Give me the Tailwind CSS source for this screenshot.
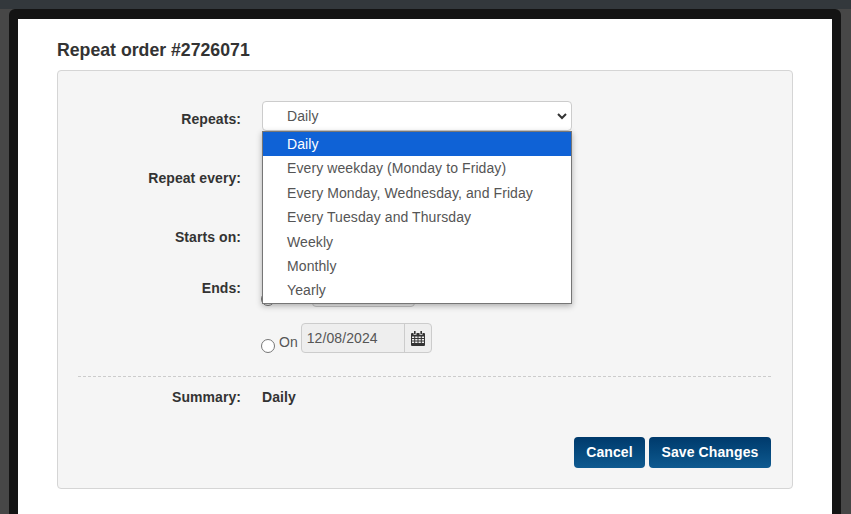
<!DOCTYPE html>
<html lang="en">
<head>
    <meta charset="UTF-8">
    <title>Repeat order</title>
    <script src="https://cdn.jsdelivr.net/npm/@tailwindcss/browser@4"></script>
</head>
<body class="h-[514px] w-[851px] overflow-hidden bg-[#474747] font-['Liberation_Sans',Arial,sans-serif] text-[#333]">
    <div class="h-[9px] bg-[#33383c]"></div>

    <!-- Modal -->
    <div class="ml-[9px] h-[505px] w-[832px] rounded-t-md bg-[#141414] px-[9px] pt-[10px]">
        <div class="h-[495px] w-[814px] bg-white px-[39px]">
            <h1 class="pt-[21px] text-[17.7px] leading-[20px] font-bold text-[#333]">Repeat order #2726071</h1>

            <div class="mt-[10px] h-[419px] w-[736px] rounded border border-[#d5d5d5] bg-[#f5f5f5] pt-[30px]">
                <!-- Repeats -->
                <div class="flex h-[30px]">
                    <div class="w-[183px] pt-[9px] text-right text-[14px] leading-[18px] font-bold tracking-[0.07px]">Repeats:</div>
                    <div class="relative ml-[21px] w-[310px]">
                        <div class="flex h-[30px] items-center justify-between rounded border border-[#ccc] bg-white pr-[3px] pl-[24px] text-[14px] tracking-[0.09px] text-[#555]">
                            <span>Daily</span>
                            <svg width="12" height="12" viewBox="0 0 12 12" fill="none" stroke="#333" stroke-width="2"><path d="M2 4l4 4 4-4"/></svg>
                        </div>
                        <ul class="absolute top-[30px] left-0 z-10 w-[310px] border border-[#767676] bg-white text-[14px] leading-[24.4px] tracking-[0.09px] text-[#555] shadow-[0_2px_6px_rgba(0,0,0,0.3)]">
                            <li class="bg-[#0f62d6] pl-[24px] text-white">Daily</li>
                            <li class="pl-[24px]">Every weekday (Monday to Friday)</li>
                            <li class="pl-[24px]">Every Monday, Wednesday, and Friday</li>
                            <li class="pl-[24px]">Every Tuesday and Thursday</li>
                            <li class="pl-[24px]">Weekly</li>
                            <li class="pl-[24px]">Monthly</li>
                            <li class="pl-[24px]">Yearly</li>
                        </ul>
                    </div>
                </div>

                <!-- Repeat every -->
                <div class="mt-[29px] h-[30px] w-[183px] pt-[9px] text-right text-[14px] leading-[18px] font-bold tracking-[0.07px]">Repeat every:</div>

                <!-- Starts on -->
                <div class="mt-[29px] h-[30px] w-[183px] pt-[9px] text-right text-[14px] leading-[18px] font-bold tracking-[0.07px]">Starts on:</div>

                <!-- Ends -->
                <div class="mt-[28px] flex h-[30px]">
                    <div class="w-[183px] pt-[2px] text-right text-[14px] leading-[18px] font-bold tracking-[0.07px]">Ends:</div>
                    <div class="ml-[20px] flex items-end">
                        <span class="mb-px h-[14px] w-[14px] rounded-full border border-[#767676] bg-white"></span>
                        <span class="ml-[37px] h-[30px] w-[103px] rounded border border-[#c4c4c4] bg-[#eee]"></span>
                    </div>
                </div>

                <!-- On date -->
                <div class="mt-[16px] flex h-[30px] pl-[203px]">
                    <span class="mt-[16px] h-[14px] w-[14px] rounded-full border border-[#767676] bg-white"></span>
                    <span class="ml-[4px] pt-[9px] text-[14px] leading-[20px] text-[#555]">On</span>
                    <div class="ml-[3px] flex h-[30px] w-[131px] rounded border border-[#ccc] bg-[#eee]">
                        <span class="flex-1 pl-[5px] text-[14px] leading-[28px] tracking-[0.09px] text-[#555]">12/08/2024</span>
                        <span class="flex w-[27px] items-center justify-center border-l border-[#ccc]">
                            <svg width="14" height="15" viewBox="0 0 14 15" fill="#333"><path d="M3 0h1.6v3H3zM9.4 0H11v3H9.4z"/><path fill-rule="evenodd" d="M1 2h1.5v1.8h3V2h3v1.8h3V2H13a1 1 0 0 1 1 1v11a1 1 0 0 1-1 1H1a1 1 0 0 1-1-1V3a1 1 0 0 1 1-1zM1 5.5V7h2.2V5.5zM4.2 5.5V7h2.3V5.5zM7.5 5.5V7h2.3V5.5zM10.8 5.5V7H13V5.5zM1 8v1.6h2.2V8zM4.2 8v1.6h2.3V8zM7.5 8v1.6h2.3V8zM10.8 8v1.6H13V8zM1 10.6V12h2.2v-1.4zM4.2 10.6V12h2.3v-1.4zM7.5 10.6V12h2.3v-1.4zM10.8 10.6V12H13v-1.4z"/></svg>
                        </span>
                    </div>
                </div>

                <div class="mr-[21px] ml-[20px] mt-[23px] border-t border-dashed border-[#ccc]"></div>

                <!-- Summary -->
                <div class="mt-[11px] flex text-[14px] leading-[18px] font-bold tracking-[0.07px]">
                    <div class="w-[183px] text-right">Summary:</div>
                    <div class="ml-[21px]">Daily</div>
                </div>

                <!-- Buttons -->
                <div class="mt-[31px] flex justify-end gap-[4px] pr-[21px]">
                    <button class="h-[31px] w-[71px] rounded bg-gradient-to-b from-[#003a6c] to-[#0f5a90] text-[14px] font-bold tracking-[0.1px] text-white">Cancel</button>
                    <button class="h-[31px] w-[122px] rounded bg-gradient-to-b from-[#003a6c] to-[#0f5a90] text-[14px] font-bold tracking-[0.1px] text-white">Save Changes</button>
                </div>
            </div>
        </div>
    </div>
</body>
</html>
